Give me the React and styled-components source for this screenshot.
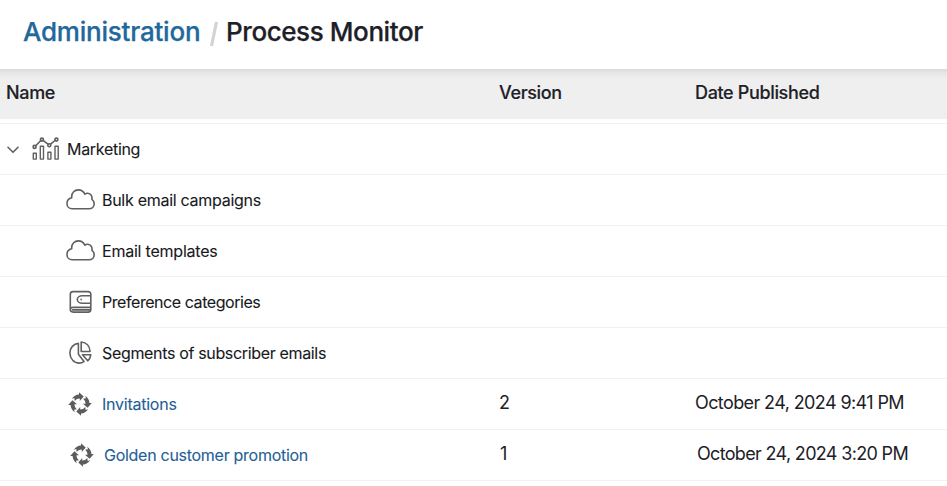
import React from "react";
import styled, { createGlobalStyle } from "styled-components";

const GlobalStyle = createGlobalStyle`
  * { box-sizing: border-box; }
  body {
    margin: 0;
    background: #fff;
    color: #1d2127;
    font-family: Inter, "Liberation Sans", sans-serif;
    overflow: hidden;
  }
`;

const Page = styled.main`
  width: 947px;
  height: 486px;
  overflow: hidden;
`;

const Breadcrumb = styled.header`
  display: flex;
  align-items: center;
  height: 69px;
  padding: 0 0 5px 23px;
  font-size: 26px;
  line-height: 32px;
  font-weight: 500;
`;

const CrumbLink = styled.a`
  width: 177px;
  color: #21689c;
  letter-spacing: -0.22px;
  -webkit-text-stroke: 0.25px currentColor;
  white-space: nowrap;
`;

const Slash = styled.svg`
  width: 10px;
  height: 26px;
  margin: 3px 7px 0 9px;
  stroke: #d3d3d3;
  stroke-width: 3.2;
`;

const Title = styled.h1`
  margin: 0;
  font: inherit;
  letter-spacing: -0.42px;
  -webkit-text-stroke: 0.25px currentColor;
  white-space: nowrap;
`;

const columns = "499px 196px 1fr";

const TableHead = styled.div`
  display: grid;
  grid-template-columns: ${columns};
  height: 50px;
  margin-bottom: 4px;
  padding-top: 12px;
  background: linear-gradient(#dcdcdc, #e6e6e6 4px, #efefef 10px);
  font-size: 18px;
  line-height: 24px;
  font-weight: 500;
  letter-spacing: -0.35px;
  -webkit-text-stroke: 0.15px currentColor;
`;

const HeadCell = styled.div`
  padding-left: ${(p) => p.$inset || 0}px;
`;

const Row = styled.div`
  display: grid;
  grid-template-columns: ${columns};
  height: 51px;
  border-top: 1px solid #f2f2f2;
  line-height: 50px;

  &:last-child {
    height: 52px;
    border-bottom: 1px solid #f2f2f2;
  }
`;

const NameCell = styled.div`
  display: flex;
  align-items: center;
  height: 50px;
  padding-left: ${(p) => p.$inset}px;
`;

const Label = styled.span`
  margin-left: ${(p) => p.$gap}px;
  color: ${(p) => (p.$link ? "#1f6096" : "#17191c")};
  font-size: 16px;
  letter-spacing: ${(p) => p.$spacing ?? -0.3}px;
  -webkit-text-stroke: 0.1px currentColor;
  white-space: nowrap;
`;

const ValueCell = styled.div`
  padding-left: ${(p) => p.$shift || 0}px;
  margin-top: -1px;
  font-size: 18px;
  letter-spacing: ${(p) => p.$spacing || 0}px;
  white-space: nowrap;
`;

const Icon = styled.svg`
  flex: none;
  width: ${(p) => p.$w}px;
  height: ${(p) => p.$h}px;
  fill: none;
  stroke: #5f6062;
  stroke-width: 1.6;
  stroke-linejoin: round;
  stroke-linecap: round;
`;

const Chevron = styled(Icon)`
  margin: 1px 13px 0 0;
  stroke-width: 1.6;
`;

const ChartIcon = () => (
  <Icon $w={28} $h={26} viewBox="0 0 28 26">
    <path d="M1.3 17.2h3v5.9h-3zM8.3 10.3h3.2v12.8H8.3zM15.9 16.2h3v6.9h-3zM23 10.3h3.2v12.8H23z" strokeWidth="1.4" />
    <path d="M3.8 9.7 8.8 4.5M11.4 4.6 16 8.1M18.6 8.2 23 4.5" />
    <circle cx="2.6" cy="10.9" r="1.5" />
    <circle cx="9.9" cy="3.6" r="1.5" />
    <circle cx="17.3" cy="9.2" r="1.5" />
    <circle cx="24.4" cy="3.6" r="1.5" />
  </Icon>
);

const CloudIcon = () => (
  <Icon $w={30} $h={22} viewBox="0 0 30 22">
    <path d="M6.2 19.8h16.7c3.1 0 5.3-2.2 5.3-5 0-1.9-.9-3.6-2.3-4.5.7-3.2-1.2-5.8-4-6-1.2-.1-2.1.2-3 .9C17.5 2.2 15.2.9 12.4.9 8.6.9 5.7 3.7 5.7 7.6v1.2C3 9.4 1 11.6 1 14.4c0 3.1 2.1 5.4 5.2 5.4z" />
  </Icon>
);

const WalletIcon = () => (
  <Icon $w={24} $h={24} viewBox="0 0 24 24">
    <path d="M22.8 17.3H5.1c-1.8 0-2.8.9-2.8 2.3s1.2 2.5 2.9 2.5h14.9c1.8 0 2.7-.9 2.7-2.6V4.3c0-1.7-1-2.7-2.7-2.7H5C3.3 1.6 2.3 2.6 2.3 4.3v15.3" />
    <path d="M4.8 19.8h17.3" strokeWidth="2" />
    <path d="M22.4 5.7h-8.2c-2.6 0-4.9 1.7-4.9 3.8s2.3 3.8 4.9 3.8h8.2" />
    <circle cx="13.2" cy="9.5" r=".3" strokeWidth="1.2" />
  </Icon>
);

const PieIcon = () => (
  <Icon $w={24} $h={24} viewBox="0 0 24 24">
    <path d="M10.4 2.4C5.6 2.8 1.9 6.8 1.9 12c0 5.7 4.3 10.1 9.4 10.1 1.6 0 3.2-.5 4.7-1.5l-5.6-7.3z" />
    <path d="M13.2 1v9.5h8.9C21.8 4.9 18.3 1.3 13.2 1zM14.5 13.8h8.3c-.3 2.4-1.5 4.5-3.1 6z" />
  </Icon>
);

const ProcessIcon = () => (
  <Icon $w={24} $h={24} viewBox="0 0 24 24">
    {[0, 90, 180, 270].map((angle) => (
      <path
        key={angle}
        d="M3.8 6.8C5.7 4.1 8 2.7 11 2.6V.2L15.7 4.4 11.8 9V6.5C9.7 6.5 8 7.3 6.7 9L6.3 6z"
        transform={`rotate(${angle} 12 12)`}
        fill="#5b5c5e"
        stroke="none"
      />
    ))}
  </Icon>
);

const rows = [
  { label: "Bulk email campaigns", icon: CloudIcon, inset: 66, gap: 6, labelSpacing: -0.28 },
  { label: "Email templates", icon: CloudIcon, inset: 66, gap: 6, labelSpacing: -0.22 },
  { label: "Preference categories", icon: WalletIcon, inset: 68, gap: 10, labelSpacing: -0.44 },
  { label: "Segments of subscriber emails", icon: PieIcon, inset: 68, gap: 10, labelSpacing: -0.34 },
  { label: "Invitations", icon: ProcessIcon, inset: 68, gap: 10, labelSpacing: -0.24, link: true, version: "2", date: "October 24, 2024 9:41 PM", spacing: -0.6 },
  { label: "Golden customer promotion", icon: ProcessIcon, inset: 70, gap: 10, labelSpacing: -0.28, link: true, version: "1", date: "October 24, 2024 3:20 PM", spacing: -0.67, shift: 2 },
];

export default function App() {
  return (
    <>
      <GlobalStyle />
      <Page>
        <Breadcrumb>
          <CrumbLink>Administration</CrumbLink>
          <Slash viewBox="0 0 10 26"><path d="M7.5 1 2.5 25" /></Slash>
          <Title>Process Monitor</Title>
        </Breadcrumb>
        <TableHead>
          <HeadCell $inset={6}>Name</HeadCell>
          <HeadCell>Version</HeadCell>
          <HeadCell>Date Published</HeadCell>
        </TableHead>
        <Row>
          <NameCell $inset={7}>
            <Chevron $w={12} $h={8} viewBox="0 0 12 8"><path d="m1 1.3 5 5 5-5" /></Chevron>
            <ChartIcon />
            <Label $gap={7}>Marketing</Label>
          </NameCell>
        </Row>
        {rows.map(({ label, icon: RowIcon, inset, gap, labelSpacing, spacing, link, version, date, shift }) => (
          <Row key={label}>
            <NameCell $inset={inset}>
              <RowIcon />
              <Label $gap={gap} $spacing={labelSpacing} $link={link}>{label}</Label>
            </NameCell>
            <ValueCell $shift={shift ? 1 : 0}>{version}</ValueCell>
            <ValueCell $shift={shift} $spacing={spacing}>{date}</ValueCell>
          </Row>
        ))}
      </Page>
    </>
  );
}
